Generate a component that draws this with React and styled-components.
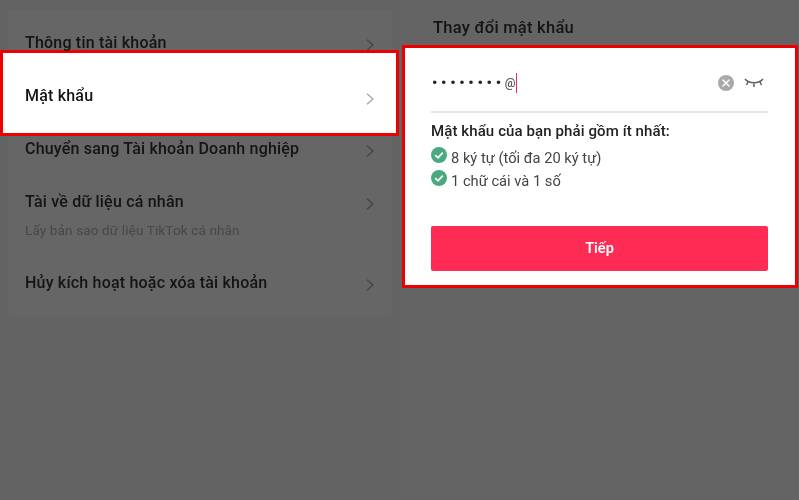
import styled, { createGlobalStyle } from 'styled-components'
import { X } from 'lucide-react'

const Global = createGlobalStyle`
    html, body {
        margin: 0;
        padding: 0;
        background: #636363;
    }
    body {
        font-family: Roboto, "Noto Sans", sans-serif;
    }
`

const Page = styled.div`
    width: 799px;
    height: 500px;
    display: flex;
    overflow: hidden;
    background: #636363;
    filter: blur(0.5px);
`

const LeftPane = styled.div`
    width: 399px;
    padding-top: 10px;
    box-sizing: border-box;
`

const RightPane = styled.div`
    width: 400px;
    padding: 0 1px 0 3px;
    box-sizing: border-box;
    background: #646464;
`

const Card = styled.div`
    margin: 0 7px 0 8px;
    height: 306px;
    background: #666;
    border-radius: 4px;
`

const Row = styled.div`
    display: flex;
    align-items: flex-start;
    justify-content: space-between;
    height: ${props => props.$height}px;
    padding: ${props => props.$top}px 18px 0 17px;
    box-sizing: border-box;
`

const ActiveRow = styled.div`
    display: flex;
    align-items: center;
    justify-content: space-between;
    height: 86px;
    margin: 0 -7px 0 -8px;
    padding: 5px 22px 0 22px;
    box-sizing: border-box;
    background: #fff;
    border: 3px solid #ee0000;
`

const RowText = styled.div`
    min-width: 0;
`

const RowTitle = styled.div`
    font-size: 16px;
    line-height: 20px;
    font-weight: 500;
    letter-spacing: 0.2px;
    color: #141414;
`

const RowSub = styled.div`
    margin-top: 9px;
    font-size: 13.6px;
    line-height: 18px;
    letter-spacing: 0.1px;
    color: #474747;
`

const Chevron = styled.svg`
    width: 8px;
    height: 12px;
    margin-top: ${props => props.$top || 0}px;
    flex: none;
    fill: none;
    stroke: ${props => props.$active ? '#a8a8a8' : '#454545'};
    stroke-width: 1.4;
`

const PaneTitle = styled.h2`
    margin: 0;
    padding: 18px 0 0 31px;
    height: 45px;
    box-sizing: border-box;
    font-size: 16.5px;
    line-height: 20px;
    font-weight: 500;
    letter-spacing: 0.25px;
    color: #141414;
`

const FormBox = styled.div`
    height: 243px;
    box-sizing: border-box;
    padding: 0 27px 0 26px;
    background: #fff;
    border: 3px solid #ee0000;
`

const InputRow = styled.div`
    display: flex;
    align-items: center;
    height: 65px;
    padding-top: 7px;
    box-sizing: border-box;
    border-bottom: 2px solid #e6e6e6;
`

const Dots = styled.span`
    padding-left: 1px;
    font-size: 15px;
    font-weight: 700;
    letter-spacing: 3.7px;
    color: #222;
    line-height: 20px;
`

const AtSign = styled.span`
    font-size: 12px;
    font-weight: 500;
    color: #555;
    line-height: 20px;
`

const Caret = styled.span`
    width: 1.5px;
    height: 20px;
    background: #e0325a;
`

const ClearButton = styled.span`
    display: flex;
    align-items: center;
    justify-content: center;
    width: 16px;
    height: 16px;
    margin-left: auto;
    border-radius: 50%;
    background: #a9a9a9;
    color: #fff;
`

const EyeIcon = styled.svg`
    width: 20px;
    height: 14px;
    margin: 2px 4px 0 10px;
    fill: none;
    stroke: #606060;
    stroke-width: 1.5;
`

const RuleTitle = styled.div`
    margin-top: 9px;
    font-size: 15px;
    line-height: 18px;
    font-weight: 500;
    letter-spacing: 0.1px;
    color: #222;
`

const Rule = styled.div`
    display: flex;
    align-items: center;
    gap: 4px;
    height: 23px;
    font-size: 14.7px;
    color: #444;
`

const RuleList = styled.div`
    margin-top: 6px;
`

const CheckIcon = styled.svg`
    width: 16px;
    height: 16px;
    margin-top: -5px;
    flex: none;
`

const NextButton = styled.button`
    display: block;
    width: 100%;
    height: 45px;
    margin-top: 34px;
    border: 0;
    border-radius: 2px;
    background: #fe2c55;
    color: #fff;
    font-family: inherit;
    font-size: 14.5px;
    font-weight: 600;
`

const ChevronIcon = ({ active, top }) => (
    <Chevron viewBox="0 0 8 12" $active={active} $top={top}>
        <path d="M1 0.8 L7 6 L1 11.2" />
    </Chevron>
)

const Check = () => (
    <CheckIcon viewBox="0 0 16 16">
        <circle cx="8" cy="8" r="8" fill="#4aa97e" />
        <path d="M4.2 8.2 L7 10.8 L11.8 5.6" fill="none" stroke="#fff" strokeWidth="1.7" />
    </CheckIcon>
)

const App = () => {
    return (
        <Page>
            <Global />
            <LeftPane>
                <Card>
                    <Row $height={40} $top={23}>
                        <RowText><RowTitle>Thông tin tài khoản</RowTitle></RowText>
                        <ChevronIcon top={6} />
                    </Row>
                    <ActiveRow>
                        <RowText><RowTitle>Mật khẩu</RowTitle></RowText>
                        <ChevronIcon active top={6} />
                    </ActiveRow>
                    <Row $height={52} $top={3}>
                        <RowText><RowTitle>Chuyển sang Tài khoản Doanh nghiệp</RowTitle></RowText>
                        <ChevronIcon top={6} />
                    </Row>
                    <Row $height={70} $top={4}>
                        <RowText>
                            <RowTitle>Tài về dữ liệu cá nhân</RowTitle>
                            <RowSub>Lấy bản sao dữ liệu TikTok cá nhân</RowSub>
                        </RowText>
                        <ChevronIcon top={6} />
                    </Row>
                    <Row $height={58} $top={15}>
                        <RowText><RowTitle>Hủy kích hoạt hoặc xóa tài khoản</RowTitle></RowText>
                        <ChevronIcon top={6} />
                    </Row>
                </Card>
            </LeftPane>
            <RightPane>
                <PaneTitle>Thay đổi mật khẩu</PaneTitle>
                <FormBox>
                    <InputRow>
                        <Dots>••••••••</Dots>
                        <AtSign>@</AtSign>
                        <Caret />
                        <ClearButton><X size={12} strokeWidth={3} /></ClearButton>
                        <EyeIcon viewBox="0 0 20 14">
                            <path d="M1 2 C5 7 15 7 19 2" />
                            <path d="M4 5 L2.5 8 M10 6.5 L10 10 M16 5 L17.5 8" />
                        </EyeIcon>
                    </InputRow>
                    <RuleTitle>Mật khẩu của bạn phải gồm ít nhất:</RuleTitle>
                    <RuleList>
                        <Rule><Check />8 ký tự (tối đa 20 ký tự)</Rule>
                        <Rule><Check />1 chữ cái và 1 số</Rule>
                    </RuleList>
                    <NextButton>Tiếp</NextButton>
                </FormBox>
            </RightPane>
        </Page>
    )
}

export default App
